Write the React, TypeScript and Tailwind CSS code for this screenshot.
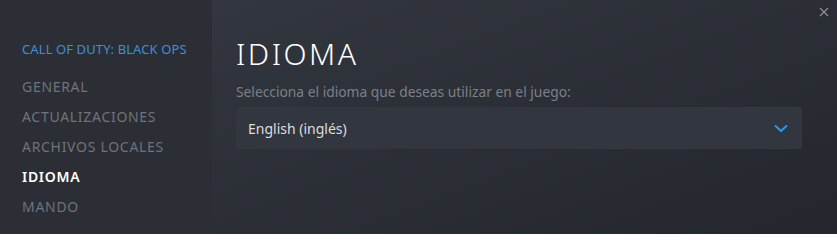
import React from "react";

const navItems = [
  { label: "GENERAL", active: false },
  { label: "ACTUALIZACIONES", active: false },
  { label: "ARCHIVOS LOCALES", active: false },
  { label: "IDIOMA", active: true },
  { label: "MANDO", active: false },
];

export default function App() {
  return (
    <div
      className="flex w-[837px] h-[234px] overflow-hidden bg-[#2b2e35]"
      style={{ fontFamily: '"Noto Sans", "Open Sans", sans-serif' }}
    >
      <aside className="w-[212px] shrink-0 bg-[#2b2e35] pl-[22px] pt-[40px]">
        <div className="text-[13px] leading-[18px] text-[#3d8fd8] tracking-[0.1px]">
          CALL OF DUTY: BLACK OPS
        </div>
        <nav className="mt-[13px] flex flex-col">
          {navItems.map((item) => (
            <div
              key={item.label}
              className={
                item.active
                  ? "h-[30px] flex items-center text-[14px] tracking-[0.7px] text-white font-semibold"
                  : "h-[30px] flex items-center text-[14px] tracking-[0.7px] text-[#6f737a]"
              }
            >
              {item.label}
            </div>
          ))}
        </nav>
      </aside>
      <main className="relative flex-1 bg-gradient-to-br from-[#32363e] to-[#23262d] pl-[24px] pr-[35px] pt-[34px]">
        <button className="absolute right-[8px] top-[7px] w-[10px] h-[10px] flex items-center justify-center">
          <svg width="10" height="10" viewBox="0 0 10 10" fill="none">
            <path d="M1 1L9 9M9 1L1 9" stroke="#8b9096" strokeWidth="1.2" />
          </svg>
        </button>
        <h1 className="text-[30px] leading-[40px] font-light tracking-[2.5px] text-white">
          IDIOMA
        </h1>
        <div className="mt-[8px] text-[13.8px] leading-[20px] text-[#7c8088]">
          Selecciona el idioma que deseas utilizar en el juego:
        </div>
        <div className="mt-[5px] h-[42px] rounded-[3px] bg-[#32363e] flex items-center justify-between pl-[12px] pr-[14px]">
          <span className="text-[14px] text-[#dcdedf]">English (inglés)</span>
          <svg width="14" height="9" viewBox="0 0 14 9" fill="none">
            <path d="M1 1.5L7 7L13 1.5" stroke="#1a9fff" strokeWidth="2" />
          </svg>
        </div>
      </main>
    </div>
  );
}
